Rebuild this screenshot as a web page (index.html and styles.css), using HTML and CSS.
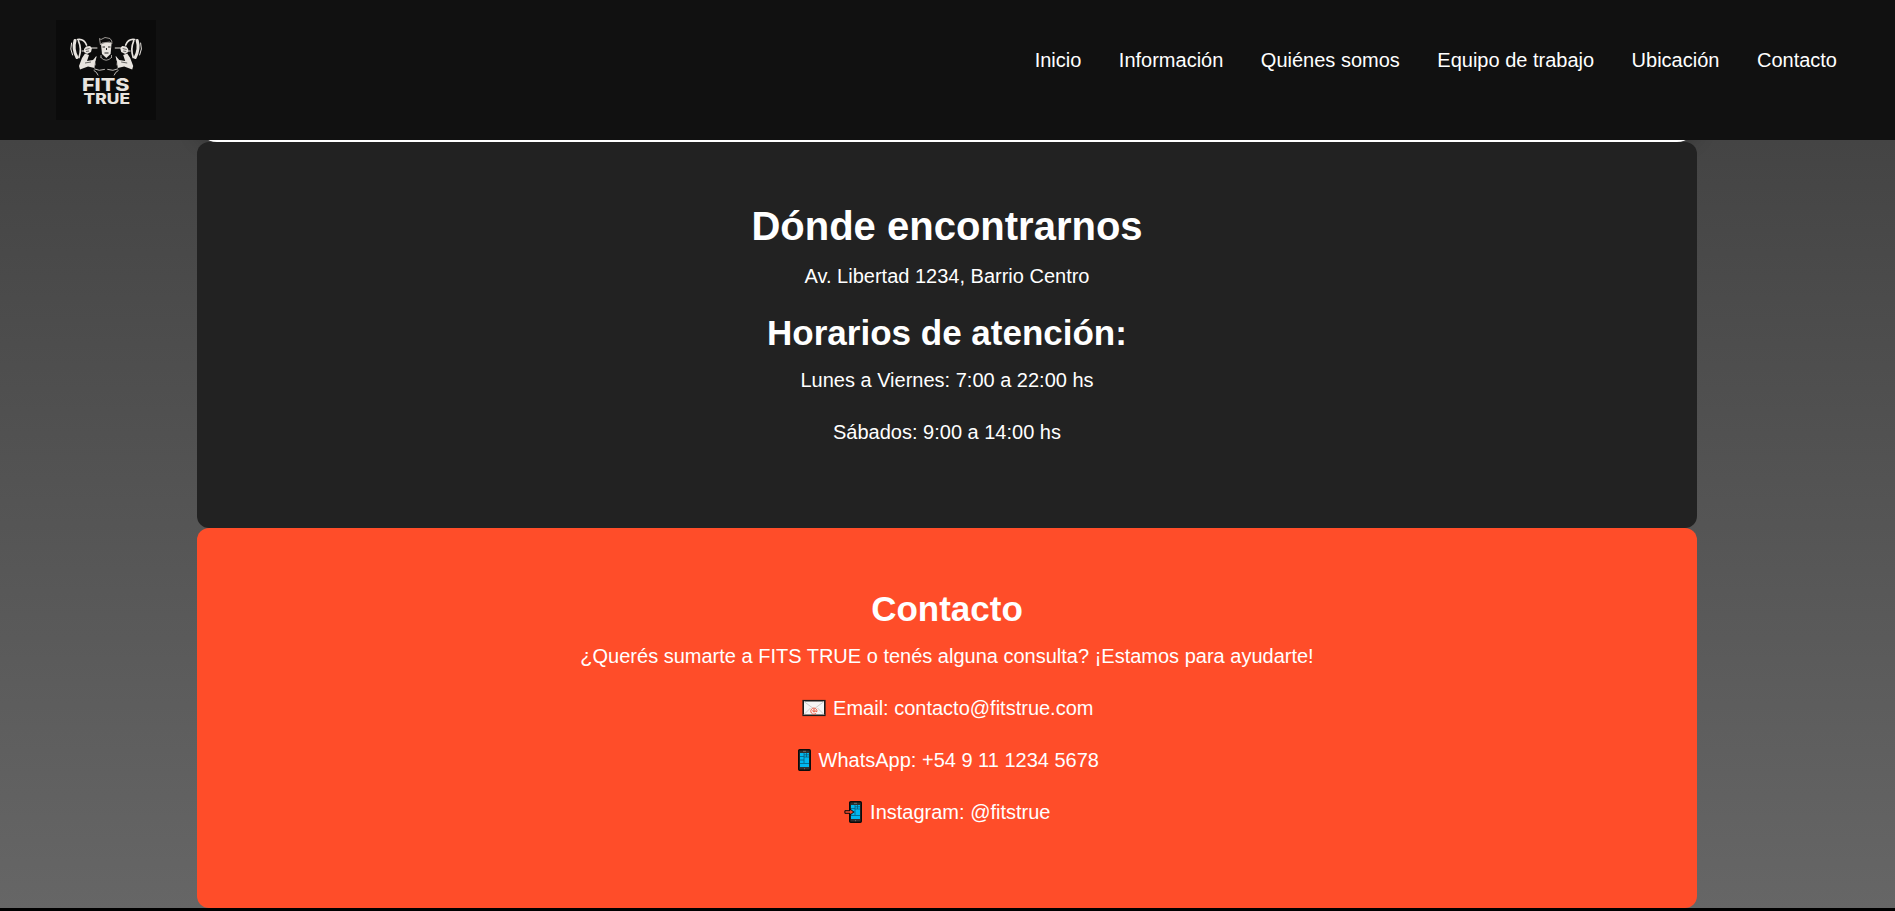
FILE: index.html
```html
<!DOCTYPE html>
<html lang="es">
<head>
<meta charset="utf-8">
<title>FITS TRUE</title>
<link rel="stylesheet" href="styles.css">
</head>
<body>
<header class="header">
  <svg class="logo" viewBox="0 0 100 100" role="img" aria-label="FITS TRUE">
    <rect width="100" height="100" fill="#0b0b0b"/>
    <g id="side">
      <g fill="none" stroke="#e8e4df" stroke-linecap="round">
        <path d="M19 20.5Q16.5 29 21 37.5" stroke-width="3"/>
        <path d="M15.5 23Q13.5 29 16.5 35" stroke-width="1"/>
        <path d="M21.5 19.5Q28 18.5 30.5 25M22.5 21Q26 29 23 37.5" stroke-width="1.7"/>
        <path d="M36 28H41M26 31H28" stroke-width="1"/>
        <path d="M38.5 49Q43 51.5 48.5 49.5M38 50.5Q41 52 42 55M40 37Q38 42 39 45" stroke-width=".8"/>
      </g>
      <path d="M28 29L30 26.5L34 26L36 28L35 32L31 34L28 32z" fill="#e8e4df"/>
      <path d="M29 33.5L33 35L31 41L37 40L40.5 36L39 42L38.5 48L32 46.5L24 49.5L23 46L26 38z" fill="#e8e4df"/>
      <path d="M29.5 29.5L33.5 28.5M30 31.5L33 31M29 43L35 42" stroke="#111" stroke-width=".6"/>
    </g>
    <use href="#side" transform="matrix(-1 0 0 1 100.2 0)"/>
    <path d="M45 24L46 34L50.3 38L54.6 34L55.6 23L51 22z" fill="#e8e4df"/>
    <path d="M43.5 18.5L45 19.5L49 17.5L54 18.5L55.8 21V24L54 22L46 23L44.5 25z" fill="#0b0b0b" stroke="#aaa6a1" stroke-width=".9"/>
    <path d="M46.5 27H49M52 27H54.5M50.5 28V30M48.5 33H52.5" fill="none" stroke="#111" stroke-width=".9"/>
    <path d="M44.5 37Q50 43.5 56 37M45 35V38M55.5 35V38" fill="none" stroke="#aaa6a1" stroke-width=".9"/>
    <g class="logo-text">
      <text x="26" y="71" font-size="17.8" textLength="47.5" lengthAdjust="spacingAndGlyphs">FITS</text>
      <text x="27.5" y="84" font-size="14" textLength="46.5" lengthAdjust="spacingAndGlyphs">TRUE</text>
    </g>
  </svg>
  <nav class="nav">
    <a>Inicio</a><a>Información</a><a>Quiénes somos</a><a>Equipo de trabajo</a><a>Ubicación</a><a>Contacto</a>
  </nav>
</header>
<main class="main">
  <div class="previous"></div>
  <section class="card location">
    <h2 class="title-large">Dónde encontrarnos</h2>
    <p>Av. Libertad 1234, Barrio Centro</p>
    <h3 class="title">Horarios de atención:</h3>
    <p>Lunes a Viernes: 7:00 a 22:00 hs</p>
    <p>Sábados: 9:00 a 14:00 hs</p>
  </section>
  <section class="card contact">
    <h2 class="title">Contacto</h2>
    <p>¿Querés sumarte a FITS TRUE o tenés alguna consulta? ¡Estamos para ayudarte!</p>
    <p><svg class="icon" viewBox="0.5 0 27 24"><rect x="2.7" y="4.7" width="21.6" height="14.6" fill="#f5f5f5" stroke="#1c1c1c" stroke-width="1.6"/><path d="M3.5 18.5L10 12M23.5 18.5L17 12M3.5 5.5L13.5 13L23.5 5.5" fill="none" stroke="#ccc"/><circle cx="13.5" cy="14.8" r="1.1" fill="none" stroke="#ef5035"/><path d="M15.7 17.2A3.1 3.1 0 1 1 16.4 14.4V15.5H15" fill="none" stroke="#ef5035" stroke-width=".9"/></svg> Email: contacto@fitstrue.com</p>
    <p><svg class="icon icon-phone" viewBox="4 0 18 24"><g id="phone"><rect x="7.7" y="1.7" width="11.6" height="20.6" rx="1" fill="#303030" stroke="#0a0a0a" stroke-width="1.4"/><path d="M9 5h9v14H9z" fill="#00b8f0"/><path d="M9 8.5h4M9 12h4M9 15.5h9M13 5v10M15.5 5v4M13 6.8h5M13 9h5" stroke="#075d7d" stroke-width=".8"/><path d="M12 3.3h3M13 20.7h1" stroke="#888" stroke-width=".7"/></g></svg> WhatsApp: +54 9 11 1234 5678</p>
    <p><svg class="icon icon-incoming" viewBox="2 0 21 24"><use href="#phone"/><path d="M2.9 10.7h5.1V9l3.8 3L8 15v-1.7H2.9z" fill="#ef4b2e" stroke="#0a0a0a" stroke-width="1"/></svg> Instagram: @fitstrue</p>
  </section>
</main>
<footer class="footer"></footer>
</body>
</html>
```
FILE: styles.css
```css
* { box-sizing: border-box; margin: 0; padding: 0; }
body {
  height: 911px;
  overflow: hidden;
  display: flex;
  flex-direction: column;
  font: 20px/1.6 "Liberation Sans", Arial, sans-serif;
  color: #fff;
  background: linear-gradient(#444 140px, #666 908px);
}
.header {
  flex: none;
  position: relative;
  z-index: 1;
  height: 140px;
  padding: 20px 58px 20px 56px;
  display: flex;
  justify-content: space-between;
  align-items: flex-start;
  background: #111;
}
.logo { width: 100px; height: 100px; }
.logo-text { font-family: Inter, "Liberation Sans", sans-serif; font-weight: 800; fill: #e8e4df; }
.nav { display: flex; gap: 37.5px; padding-top: 24px; }
.main { flex: none; width: 1500px; margin: 0 198px 0 197px; }
.previous {
  height: 60px;
  margin-top: -58px;
  border-radius: 20px;
  background: #fff;
  box-shadow: 0 0 20px rgba(0, 0, 0, .3);
}
.card { position: relative; padding: 60px 20px; border-radius: 12px; text-align: center; }
.location { background: #222; }
.contact { background: #ff4d29; }
.title-large, .title { line-height: 1.2; margin-bottom: 10px; }
.title-large { font-size: 40px; }
.title { font-size: 35px; }
.card p { margin-bottom: 20px; }
.icon { width: 27px; height: 24px; vertical-align: -5px; }
.icon-phone { width: 18px; }
.icon-incoming { width: 21px; }
.footer { flex: 1; background: #000; }
```
